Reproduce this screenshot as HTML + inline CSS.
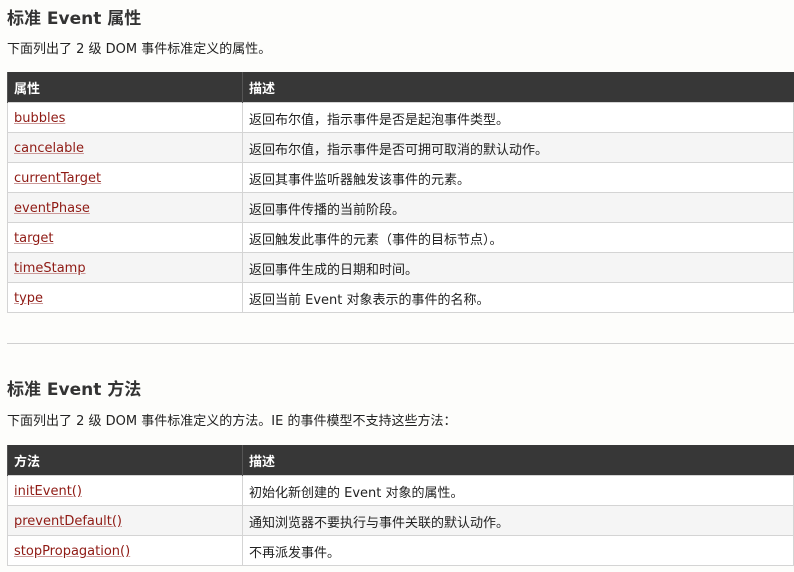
<!DOCTYPE html>
<html><head><meta charset="utf-8"><style>
body{margin:0;background:#fdfdfb;font-family:"DejaVu Sans","Noto Sans CJK SC",sans-serif;color:#222;width:794px;height:572px;overflow:hidden;position:relative}
h2{position:absolute;left:7px;margin:0;font-size:17px;font-weight:bold;color:#333}
p{position:absolute;left:7px;margin:0;font-size:13px;color:#222}
table{position:absolute;left:7px;width:787px;border-collapse:collapse;font-size:13px;table-layout:fixed}
th{background:#373737;color:#fff;text-align:left;height:30px;padding:0 6px;font-weight:bold;border-left:1px solid #555}
td{height:30px;padding:2px 6px 0;border:1px solid #d4d4d4;box-sizing:border-box}
tr:nth-child(odd) td{background:#f5f5f5}
tr:nth-child(even) td{background:#fff}
a{color:#8f1a14;text-decoration:underline;text-decoration-color:#c99}
hr{position:absolute;left:7px;width:787px;top:343px;margin:0;border:0;border-top:1px solid #d0d0d0}
</style></head><body>
<h2 style="top:4px">标准 Event 属性</h2>
<p style="top:38px">下面列出了 2 级 DOM 事件标准定义的属性。</p>
<table style="top:72px"><col style="width:235px"><col>
<tr><th>属性</th><th>描述</th></tr>
<tr><td><a>bubbles</a></td><td>返回布尔值，指示事件是否是起泡事件类型。</td></tr>
<tr><td><a>cancelable</a></td><td>返回布尔值，指示事件是否可拥可取消的默认动作。</td></tr>
<tr><td><a>currentTarget</a></td><td>返回其事件监听器触发该事件的元素。</td></tr>
<tr><td><a>eventPhase</a></td><td>返回事件传播的当前阶段。</td></tr>
<tr><td><a>target</a></td><td>返回触发此事件的元素（事件的目标节点）。</td></tr>
<tr><td><a>timeStamp</a></td><td>返回事件生成的日期和时间。</td></tr>
<tr><td><a>type</a></td><td>返回当前 Event 对象表示的事件的名称。</td></tr>
</table>
<hr>
<h2 style="top:375px">标准 Event 方法</h2>
<p style="top:410px">下面列出了 2 级 DOM 事件标准定义的方法。IE 的事件模型不支持这些方法：</p>
<table style="top:445px"><col style="width:235px"><col>
<tr><th>方法</th><th>描述</th></tr>
<tr><td><a>initEvent()</a></td><td>初始化新创建的 Event 对象的属性。</td></tr>
<tr><td><a>preventDefault()</a></td><td>通知浏览器不要执行与事件关联的默认动作。</td></tr>
<tr><td><a>stopPropagation()</a></td><td>不再派发事件。</td></tr>
</table>
</body></html>
